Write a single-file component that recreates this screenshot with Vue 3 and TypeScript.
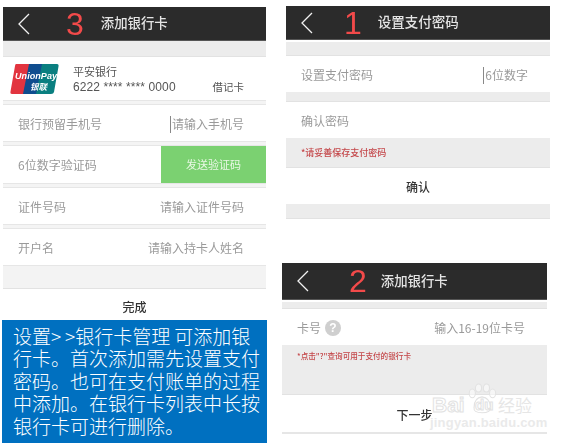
<template>
  <div class="page">
    <div class="col">
      <section class="screen screen-card">
        <header class="bar">
          <svg class="back" width="16" height="24" viewBox="0 0 16 24"><polyline points="13,2 3,12 13,22" /></svg>
          <span class="step step-3">3</span>
          <span class="title">添加银行卡</span>
        </header>
        <div class="gap gap-top"></div>
        <div class="bank">
          <svg class="logo" width="50" height="32" viewBox="0 0 50 32">
            <path d="M6 1h15l-6 30H2q-2 0-1.500-2.500L5 3q.3-2 1-2z" fill="#e2343f" />
            <path d="M19 1h15l-6 30H13z" fill="#0f4d8f" />
            <path d="M32 1h15q2 0 1.500 2.500L44 29q-.4 2-3 2H26z" fill="#0a7f80" />
            <text x="5" y="16" class="logo-en" textLength="42">UnionPay</text>
            <text x="20" y="27" class="logo-cn">银联</text>
          </svg>
          <div class="bank-info">
            <div class="bank-name">平安银行</div>
            <div class="bank-line">
              <span class="bank-no">6222 **** **** 0000</span>
              <span class="bank-type">借记卡</span>
            </div>
          </div>
        </div>
        <div class="sep"></div>
        <div class="row">
          <span>银行预留手机号</span>
          <span class="caret">请输入手机号</span>
        </div>
        <div class="sep"></div>
        <div class="row row-code">
          <span>6位数字验证码</span>
          <span class="send">发送验证码</span>
        </div>
        <div class="sep"></div>
        <div class="row">
          <span>证件号码</span>
          <span>请输入证件号码</span>
        </div>
        <div class="sep"></div>
        <div class="row">
          <span>开户名</span>
          <span>请输入持卡人姓名</span>
        </div>
        <div class="gap gap-done"></div>
        <div class="action action-done">完成</div>
      </section>
      <div class="note">设置&gt;&thinsp;&gt;银行卡管理 可添加银行卡。首次添加需先设置支付密码。也可在支付账单的过程中添加。在银行卡列表中长按银行卡可进行删除。</div>
    </div>

    <div class="col">
      <section class="screen screen-pwd">
        <header class="bar">
          <svg class="back" width="16" height="24" viewBox="0 0 16 24"><polyline points="13,2 3,12 13,22" /></svg>
          <span class="step step-1">1</span>
          <span class="title title-pwd">设置支付密码</span>
        </header>
        <div class="gap gap-pwd-top"></div>
        <div class="row">
          <span>设置支付密码</span>
          <span class="caret">6位数字</span>
        </div>
        <div class="gap gap-pwd-mid"></div>
        <div class="row">
          <span>确认密码</span>
        </div>
        <div class="gap gap-hint">
          <span class="hint">*请妥善保存支付密码</span>
        </div>
        <div class="action">确认</div>
        <div class="gap gap-pwd-end"></div>
      </section>

      <section class="screen screen-no">
        <header class="bar">
          <svg class="back" width="16" height="24" viewBox="0 0 16 24"><polyline points="13,2 3,12 13,22" /></svg>
          <span class="step step-2">2</span>
          <span class="title">添加银行卡</span>
        </header>
        <div class="gap gap-no-top"></div>
        <div class="row">
          <span class="card-no">卡号 <i class="help">?</i></span>
          <span>输入16-19位卡号</span>
        </div>
        <div class="gap gap-no-hint">
          <span class="hint hint-small">*点击"?"查询可用于支付的银行卡</span>
        </div>
        <div class="action action-next">下一步</div>
        <div class="rule"></div>
      </section>

      <div class="mark">
        <svg class="paw" width="30" height="33" viewBox="0 0 34 36">
          <ellipse cx="6" cy="11" rx="3.500" ry="5" />
          <ellipse cx="13" cy="5" rx="3.500" ry="4.500" />
          <ellipse cx="22" cy="5" rx="3.500" ry="4.500" />
          <ellipse cx="29" cy="11" rx="3.500" ry="5" />
          <path d="M8 27q0-11 9-12 9 1 10 12 0 6-10 6T8 27z" />
        </svg>
        <span class="mark-bai">Bai</span>
        <span class="mark-du">du</span>
        <span class="mark-cn">经验</span>
        <span class="mark-url">jingyan.baidu.com</span>
      </div>
    </div>
  </div>
</template>

<script setup lang="ts">
</script>

<style>
html,
body {
  background: #fff;
  overflow: hidden;
}
</style>

<style scoped>
.page {
  display: flex;
  width: 564px;
  height: 443px;
  overflow: hidden;
  position: relative;
  background: #fff;
  font-family: "Noto Sans CJK SC", "Liberation Sans", sans-serif;
  font-size: 12px;
  color: #9a9a9a;
}

.col {
  width: 282px;
  flex: none;
}

.screen {
  filter: blur(0.4px);
  background: #fff;
}

.screen-card {
  width: 263px;
  margin: 7px 0 0 3px;
}

.screen-pwd {
  width: 264px;
  margin: 6px 0 0 4px;
}

.screen-no {
  width: 265px;
  margin-top: 44px;
}

.bar {
  display: flex;
  align-items: center;
  height: 34px;
  background: #2b2b2b;
  border-bottom: 1px solid #555;
  box-sizing: border-box;
  color: #e4e4e4;
}

.screen-no .bar {
  height: 37px;
}

.back {
  margin-left: 13px;
  flex: none;
}

.back polyline {
  fill: none;
  stroke: #f2f2f2;
  stroke-width: 1.3;
}

.step {
  font-family: "Liberation Sans", sans-serif;
  font-size: 32px;
  line-height: 34px;
  color: #f24a4a;
}

.step-3 {
  margin-left: 34px;
}

.step-1 {
  margin-left: 29px;
}

.step-2 {
  margin-left: 38px;
}

.title {
  margin-left: 17px;
  padding-bottom: 3px;
  font-size: 13.400px;
  font-weight: 500;
}

.title-pwd {
  margin-left: 16px;
  font-size: 13.500px;
}

.screen-no .title {
  margin-left: 14px;
}

.gap {
  background: #ececec;
  border-bottom: 1px solid #e2e2e2;
  box-sizing: border-box;
}

.gap-top {
  height: 16px;
}

.gap-done {
  height: 24px;
  background: #f3f3f3;
  border-top: 1px solid #e6e6e6;
}

.gap-pwd-top {
  height: 16px;
  border-top: 2px solid #fff;
}

.gap-pwd-mid {
  height: 10px;
}

.gap-hint {
  display: flex;
  align-items: center;
  height: 30px;
  padding-left: 15px;
}

.gap-pwd-end {
  height: 15px;
}

.gap-no-top {
  height: 9px;
  border-top: 2px solid #fff;
}

.gap-no-hint {
  height: 50px;
  padding: 5px 0 0 15px;
}

.bank {
  display: flex;
  align-items: center;
  height: 43px;
  padding-left: 7px;
}

.logo {
  flex: none;
  margin-top: 1px;
}

.logo-en {
  font-family: "Liberation Sans", sans-serif;
  font-size: 9px;
  font-style: italic;
  font-weight: 700;
  fill: #fff;
}

.logo-cn {
  font-size: 8.500px;
  font-style: italic;
  font-weight: 700;
  fill: #fff;
}

.bank-info {
  flex: 1;
  margin-left: 13px;
  color: #555;
}

.bank-name {
  font-size: 11px;
  line-height: 16px;
}

.bank-line {
  display: flex;
  justify-content: space-between;
  padding-right: 22px;
  font-family: "Liberation Sans", sans-serif;
  font-size: 12px;
  line-height: 16px;
}

.bank-no {
  letter-spacing: 0.1px;
}

.bank-type {
  font-family: "Noto Sans CJK SC", sans-serif;
  font-size: 10.500px;
}

.sep {
  height: 5px;
  background: #f4f4f4;
  border-top: 1px solid #e6e6e6;
  border-bottom: 1px solid #e6e6e6;
  box-sizing: border-box;
}

.row {
  display: flex;
  align-items: center;
  justify-content: space-between;
  box-sizing: border-box;
  height: 36px;
  padding: 1px 22px 0 15px;
  line-height: 36px;
}

.row-code {
  height: 37px;
  padding: 0 0 0 15px;
}

.caret::before {
  content: "";
  display: inline-block;
  width: 1px;
  height: 17px;
  margin-right: 1px;
  background: #888;
  vertical-align: -4px;
}

.send {
  width: 105px;
  height: 37px;
  line-height: 37px;
  text-align: center;
  font-size: 11px;
  color: #e8f8e4;
  background: #7bd171;
}

.action {
  display: flex;
  align-items: center;
  justify-content: center;
  box-sizing: border-box;
  height: 36px;
  padding-top: 1px;
  color: #333;
  font-weight: 500;
}

.action-done {
  height: 31px;
  padding-top: 3px;
}

.action-next {
  height: 37px;
}

.rule {
  height: 2px;
  background: #e6e6e6;
}

.hint {
  font-size: 9px;
  font-weight: 500;
  color: #c4474a;
}

.hint-small {
  display: block;
  font-size: 7.600px;
  line-height: 12px;
}

.card-no {
  display: flex;
  align-items: center;
  gap: 4px;
}

.help {
  width: 16px;
  height: 16px;
  border-radius: 50%;
  background: #cfcfcf;
  color: #fff;
  font-family: "Liberation Sans", sans-serif;
  font-size: 12px;
  font-style: normal;
  font-weight: 700;
  line-height: 16px;
  text-align: center;
}

.note {
  box-sizing: border-box;
  width: 265px;
  height: 123px;
  margin-left: 2px;
  padding: 5px 6px 0 11px;
  background: #0070c0;
  color: #fff;
  font-size: 19px;
  font-weight: 300;
  line-height: 22.400px;
}

/* 透かしは右下の画面に重ねる */
.mark {
  position: absolute;
  left: 430px;
  top: 380px;
  width: 110px;
  height: 50px;
  color: #e4e4e4;
  font-family: "Liberation Sans", sans-serif;
  pointer-events: none;
}

.paw {
  position: absolute;
  left: 37px;
  top: 3px;
}

.paw ellipse,
.paw path {
  fill: rgba(255, 255, 255, 0.5);
  stroke: #e2e2e2;
  stroke-width: 1.200;
}

.mark-bai,
.mark-du {
  position: absolute;
  font-weight: 700;
  color: rgba(255, 255, 255, 0.6);
  -webkit-text-stroke: 1px #e2e2e2;
}

.mark-bai {
  left: 2px;
  top: 13px;
  font-size: 21px;
  line-height: 24px;
}

.mark-du {
  left: 45px;
  top: 17px;
  font-size: 15px;
  line-height: 16px;
}

.mark-cn {
  position: absolute;
  left: 68px;
  top: 15px;
  font-family: "Noto Sans CJK SC", sans-serif;
  font-size: 17px;
  line-height: 20px;
  color: #e6e6e6;
}

.mark-url {
  position: absolute;
  left: 0;
  top: 36px;
  font-size: 13px;
  line-height: 14px;
  letter-spacing: 0.2px;
  font-weight: 700;
  color: #eaeaea;
}
</style>
